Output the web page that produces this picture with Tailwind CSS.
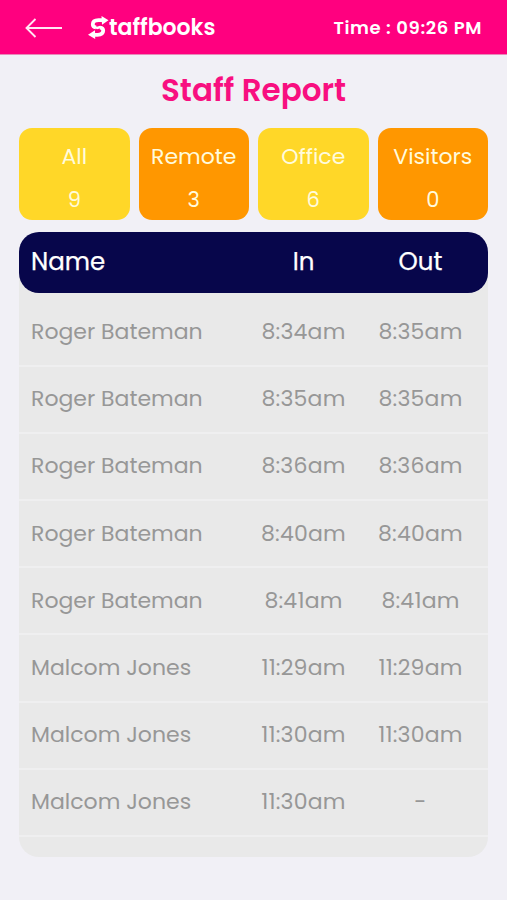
<!DOCTYPE html>
<html lang="en"><head><meta charset="utf-8"><title>Staff Report</title>
<script src="https://cdn.jsdelivr.net/npm/@tailwindcss/browser@4"></script></head>
<body class="h-[900px] overflow-hidden bg-[#f1f0f6] font-[Poppins,Inter,sans-serif]">
<header class="flex h-[55px] items-center bg-[#ff007f] pl-[25px] pr-[25px] text-white border-b border-[#e889b8]">
  <svg class="mt-px h-5 w-[37px] shrink-0" viewBox="0 0 37 20" fill="none" stroke="#ffe6f3" stroke-width="1.9"><path d="M10.5 1 1.5 10 10.5 19M1.5 10H37"/></svg>
  <div class="ml-[26px] flex items-center">
    <svg class="mt-px h-[23px] w-[21px]" viewBox="0 0 21 23"><path fill="none" stroke="#fff" stroke-width="3.8" d="M15 4.2H10.5Q4.8 4.2 4.8 8.4 4.8 10.8 8 11.4M6 18.8H9.5Q15.2 18.8 15.2 14.6 15.2 12 12 11.6"/><path fill="#fff" d="M13.5 0 20.5 4.2 14 8.8zM7 14.2 0 18.8 7.2 23zM5 10.6H9L12 12.4 9 13.2zM15.5 12.6H12L9 10.8 12 9.8z"/></svg>
    <span class="pt-[2px] text-[22px] font-semibold leading-6">taffbooks</span>
  </div>
  <span class="ml-auto text-[18px] font-semibold tracking-[0.6px]">Time : 09:26 PM</span>
</header>
<main class="px-[19px]">
  <h1 class="flex h-[73px] items-center justify-center pb-[3px] text-[31px] font-semibold text-[#f80f80]"><span>Staff Report</span></h1>
  <section class="grid h-[92px] grid-cols-4 grid-rows-[92px] gap-[9px] text-center text-[22px] leading-[43px] text-[#fffbdc]">
    <div class="rounded-[13px] bg-[#ffd728] pt-[7px]"><div>All</div><div class="text-[21px]">9</div></div>
    <div class="rounded-[13px] bg-[#ff9700] pt-[7px]"><div>Remote</div><div class="text-[21px]">3</div></div>
    <div class="rounded-[13px] bg-[#ffd728] pt-[7px]"><div>Office</div><div class="text-[21px]">6</div></div>
    <div class="rounded-[13px] bg-[#ff9700] pt-[7px]"><div>Visitors</div><div class="text-[21px]">0</div></div>
  </section>
  <section class="mt-[12px] h-[625px] rounded-[20px] bg-[#e9e9e9]">
    <div class="bg-linear-to-b from-[#f1f0f6] from-50% to-[#e9e9e9] to-50%">
    <div class="grid h-[61px] grid-cols-[226px_117px_117px] items-center rounded-[20px] bg-[#07064b] pb-[1px] text-center text-[24.5px] text-white [-webkit-text-stroke:0.25px_white]"><span class="pl-[12px] text-left">Name</span><span>In</span><span>Out</span></div>
    </div>
    <div class="pt-[6.5px] text-[22px] text-[#979797]" id="rows"></div>
  </section>
</main>
<script>
const data=[['Roger Bateman','8:34am','8:35am'],['Roger Bateman','8:35am','8:35am'],['Roger Bateman','8:36am','8:36am'],['Roger Bateman','8:40am','8:40am'],['Roger Bateman','8:41am','8:41am'],['Malcom Jones','11:29am','11:29am'],['Malcom Jones','11:30am','11:30am'],['Malcom Jones','11:30am','-']];
document.getElementById('rows').innerHTML=data.map(r=>`<div class="grid h-[67.2px] grid-cols-[226px_117px_117px] items-center border-b-2 border-[#efeff0] pb-px text-center"><span class="pl-[12px] text-left">${r[0]}</span><span class="tracking-[0.2px]">${r[1]}</span><span class="tracking-[0.2px]">${r[2]}</span></div>`).join('');
</script>
</body></html>
